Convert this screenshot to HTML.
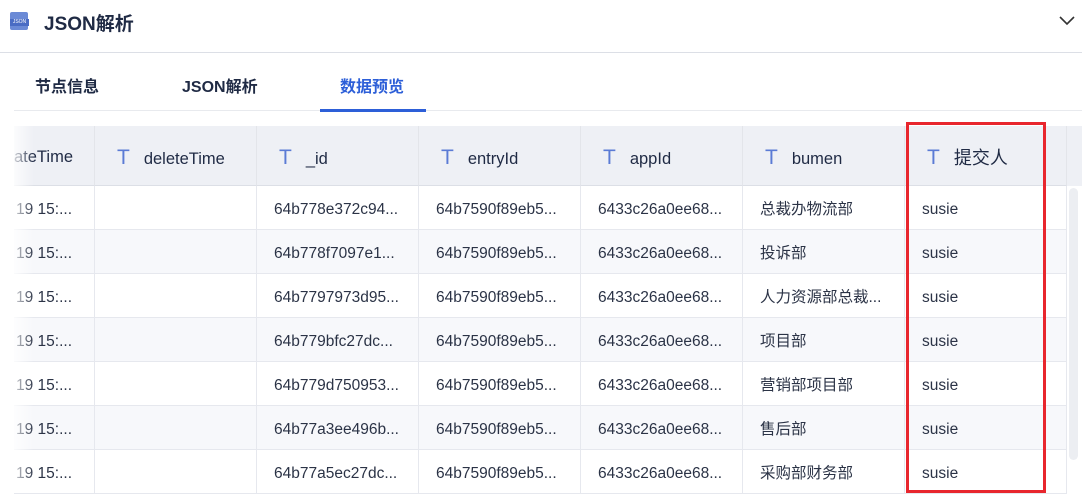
<html><head><style>
body{margin:0;width:1082px;height:493px;overflow:hidden;background:#fff;font-family:"Liberation Sans","Noto Sans CJK SC",sans-serif;position:relative;color:#1f2a44}
.a{position:absolute}
.th{position:absolute;top:126px;height:60px;background:#eef0f5;border-right:1px solid #e3e5ea;border-bottom:1px solid #dcdfe6;box-sizing:border-box;font-size:16.5px;line-height:63px;color:#1f2a44}
.th b{font-weight:normal;color:#5b7bd5;font-size:21px;margin:0 14px 0 22px}
.td{position:absolute;height:44px;border-right:1px solid #e6e8ee;border-bottom:1px solid #e6e8ee;box-sizing:border-box;font-size:15.5px;line-height:47px;padding-left:17px;color:#2b3346;white-space:nowrap;overflow:hidden}
</style></head><body>
<div class="a" style="left:10px;top:12px;width:18px;height:18px;background:#6b8ad6;border-radius:2px"></div>
<div class="a" style="left:10px;top:19px;width:19px;height:7px;background:#4a6cc4;font-size:5px;color:#fff;line-height:7px;text-align:center">JSON</div>
<div class="a" style="left:44px;top:9px;font-size:19px;font-weight:bold;color:#1f2a44">JSON解析</div>
<svg class="a" style="left:1058px;top:14px" width="18" height="12"><path d="M2 3l7 7 7-7" fill="none" stroke="#333" stroke-width="1.6"/></svg>
<div class="a" style="left:0;top:52px;width:1082px;height:1px;background:#dcdfe6"></div>
<div class="a" style="left:35px;top:73px;font-size:16px;font-weight:bold;color:#1f2a44">节点信息</div>
<div class="a" style="left:182px;top:73px;font-size:16px;font-weight:bold;color:#1f2a44">JSON解析</div>
<div class="a" style="left:340px;top:73px;font-size:16px;font-weight:bold;color:#2d5fd8">数据预览</div>
<div class="a" style="left:14px;top:110px;width:1068px;height:1px;background:#e8eaee"></div>
<div class="a" style="left:320px;top:109px;width:106px;height:3px;background:#2d5fd8"></div>

<div class="th" style="left:14px;width:81px;padding-left:0">ateTime</div>
<div class="th" style="left:95px;width:162px"><b>T</b>deleteTime</div>
<div class="th" style="left:257px;width:162px"><b>T</b>_id</div>
<div class="th" style="left:419px;width:162px"><b>T</b>entryId</div>
<div class="th" style="left:581px;width:162px"><b>T</b>appId</div>
<div class="th" style="left:743px;width:162px"><b>T</b>bumen</div>
<div class="th" style="left:905px;width:162px;font-size:18px"><b>T</b>提交人</div>
<div class="th" style="left:1067px;width:15px;border:none"></div>
<div id="rows"></div>
<script>
var ids=["64b778e372c94...","64b778f7097e1...","64b7797973d95...","64b779bfc27dc...","64b779d750953...","64b77a3ee496b...","64b77a5ec27dc..."];
var bm=["总裁办物流部","投诉部","人力资源部总裁...","项目部","营销部项目部","售后部","采购部财务部"];
var L=[14,95,257,419,581,743,905],h="";
for(var i=0;i<7;i++){var y=186+i*44,bg=i%2?"#f7f8fb":"#fff";
var v=["19 15:...","",ids[i],"64b7590f89eb5...","6433c26a0ee68...",bm[i],"susie"];
for(var j=0;j<7;j++){h+='<div class="td" style="left:'+L[j]+'px;top:'+y+'px;width:'+(j==0?81:162)+'px;background:'+bg+(j==0?';padding-left:2px':'')+'">'+v[j]+'</div>';}}
document.getElementById("rows").innerHTML=h;
</script>
<div class="a" style="left:14px;top:126px;width:20px;height:367px;background:linear-gradient(90deg,rgba(255,255,255,.8),rgba(255,255,255,0))"></div>
<div class="a" style="left:1069px;top:188px;width:9px;height:272px;background:#eceef2;border-radius:5px"></div>
<div class="a" style="left:906px;top:122px;width:140px;height:371px;border:3px solid #e8262d;box-sizing:border-box"></div>
</body></html>
